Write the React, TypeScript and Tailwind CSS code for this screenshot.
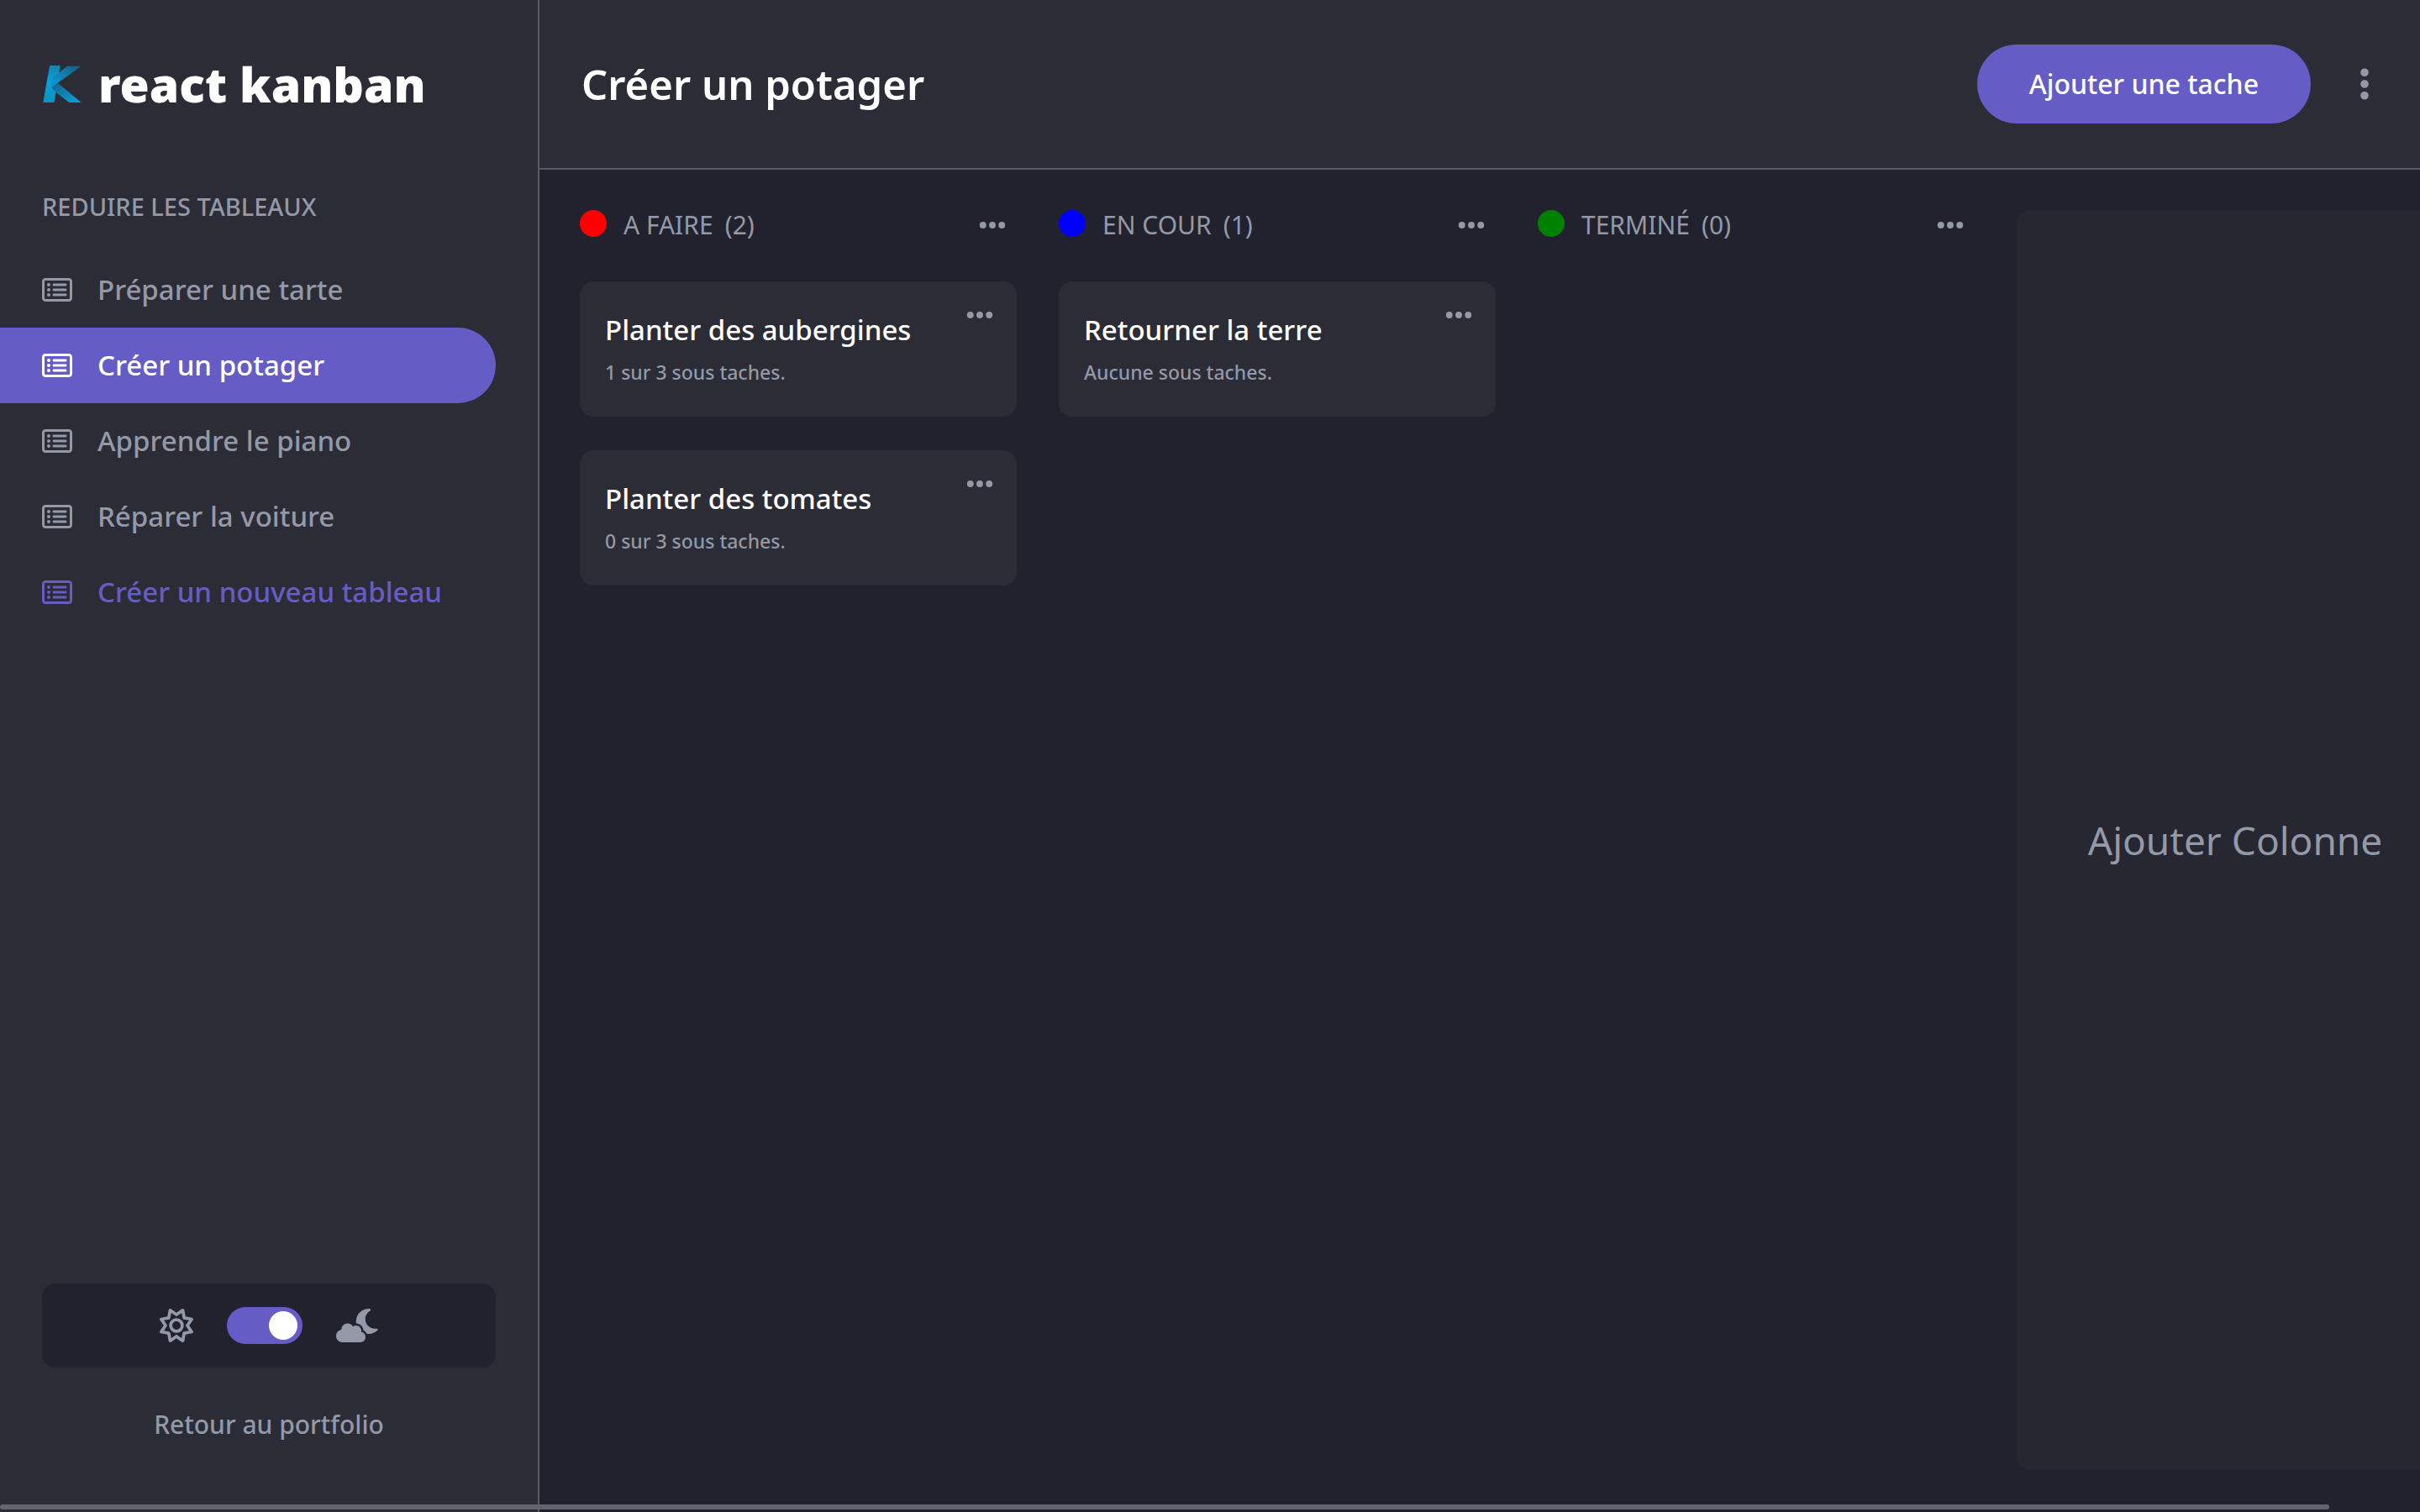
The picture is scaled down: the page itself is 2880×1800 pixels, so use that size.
import { useState } from "react";
import {
  FaCloudMoon,
  FaEllipsis,
  FaEllipsisVertical,
  FaRegRectangleList,
  FaRegSun,
} from "react-icons/fa6";

type Task = { title: string; detail: string };
type Column = { name: string; dot: string; tasks: Task[] };

const boards = ["Préparer une tarte", "Créer un potager", "Apprendre le piano", "Réparer la voiture"];

const columns: Column[] = [
  {
    name: "A FAIRE",
    dot: "bg-[#ff0000]",
    tasks: [
      { title: "Planter des aubergines", detail: "1 sur 3 sous taches." },
      { title: "Planter des tomates", detail: "0 sur 3 sous taches." },
    ],
  },
  {
    name: "EN COUR",
    dot: "bg-[#0000ff]",
    tasks: [{ title: "Retourner la terre", detail: "Aucune sous taches." }],
  },
  { name: "TERMINÉ", dot: "bg-[#008000]", tasks: [] },
];

function Logo() {
  return (
    <svg viewBox="37 58 134 130" className="h-11 w-[46px] shrink-0" aria-hidden="true">
      <defs>
        <linearGradient id="stem" x1="0" y1="0" x2="0" y2="1">
          <stop offset="0" stopColor="#0f86b0" />
          <stop offset="0.45" stopColor="#0d9fdb" />
          <stop offset="1" stopColor="#0b93bf" />
        </linearGradient>
        <linearGradient id="arm" x1="0" y1="1" x2="1" y2="0">
          <stop offset="0" stopColor="#0a9be0" />
          <stop offset="0.55" stopColor="#0f7fae" />
          <stop offset="1" stopColor="#155a78" />
        </linearGradient>
        <linearGradient id="leg" x1="0" y1="0" x2="1" y2="1">
          <stop offset="0" stopColor="#125f86" />
          <stop offset="0.55" stopColor="#0e86b8" />
          <stop offset="1" stopColor="#0aa3d8" />
        </linearGradient>
      </defs>
      <path d="M60 58H97L76 188H37Z" fill="url(#stem)" />
      <path d="M62 132L85 116L171 188H128L80 150Z" fill="url(#leg)" />
      <path d="M122 60H171L62 138L70 100Z" fill="url(#arm)" />
    </svg>
  );
}

function TaskCard({ task }: { task: Task }) {
  return (
    <li className="flex items-start justify-between rounded-2xl bg-[#2b2c36] pt-[22px] pr-[26px] pb-[30px] pl-[30px]">
      <div className="pt-2">
        <h3 className="text-[33px] leading-[56px] font-medium text-white">{task.title}</h3>
        <p className="text-[23px] leading-[45px] font-medium text-[#9499a8]">{task.detail}</p>
      </div>
      <button type="button" aria-label="Options de la tache" className="text-[#9499a8]">
        <FaEllipsis className="size-9" />
      </button>
    </li>
  );
}

function BoardColumn({ column }: { column: Column }) {
  return (
    <section className="w-[520px] shrink-0">
      <div className="flex h-9 items-start pr-[11px] text-[#9499a8]">
        <span className={`mr-5 size-8 rounded-full ${column.dot}`} />
        <h2 className="flex gap-3.5 text-[30px] leading-9">
          <span>{column.name}</span>
          <span>({column.tasks.length})</span>
        </h2>
        <button type="button" aria-label="Options de la colonne" className="ml-auto">
          <FaEllipsis className="size-9" />
        </button>
      </div>
      <ul className="mt-[49px] flex flex-col gap-10">
        {column.tasks.map((task) => (
          <TaskCard key={task.title} task={task} />
        ))}
      </ul>
    </section>
  );
}

function Sidebar({ active, onSelect }: { active: string; onSelect: (name: string) => void }) {
  const [dark, setDark] = useState(true);
  return (
    <aside className="flex w-[642px] shrink-0 flex-col border-r-2 border-[#5a5a65] bg-[#2b2c36]">
      <div className="flex h-[200px] items-center gap-5 pl-[51px]">
        <Logo />
        <p className="text-[57px] leading-none font-black text-white">react kanban</p>
      </div>
      <h2 className="mt-[26px] mb-[34px] pl-[50px] text-[29px] leading-10 font-medium text-[#9499a8]">
        REDUIRE LES TABLEAUX
      </h2>
      <nav className="flex flex-col pr-[50px] text-[33px] font-medium text-[#9499a8]">
        {boards.map((name) => (
          <button
            key={name}
            type="button"
            onClick={() => onSelect(name)}
            className={
              name === active
                ? "flex h-[90px] items-center gap-[30px] rounded-r-full bg-[#655dc5] pl-[50px] text-white"
                : "flex h-[90px] items-center gap-[30px] pl-[50px]"
            }
          >
            <FaRegRectangleList className="size-9" />
            {name}
          </button>
        ))}
        <button type="button" className="flex h-[90px] items-center gap-[30px] pl-[50px] text-[#655dc5]">
          <FaRegRectangleList className="size-9" />
          Créer un nouveau tableau
        </button>
      </nav>
      <div className="mx-[50px] mt-auto flex h-[100px] items-center justify-center gap-10 rounded-2xl bg-[#21222d] text-[#9499a8]">
        <FaRegSun className="size-10" />
        <label className="flex h-11 w-[90px] cursor-pointer items-center rounded-full bg-[#655dc5] px-1.5">
          <input
            type="checkbox"
            role="switch"
            aria-label="Mode sombre"
            checked={dark}
            onChange={(e) => setDark(e.target.checked)}
            className="size-[34px] cursor-pointer appearance-none rounded-full bg-white checked:ml-auto"
          />
        </label>
        <FaCloudMoon className="h-10 w-[50px]" />
      </div>
      <a
        href="#portfolio"
        className="mt-12 mb-[84px] self-center text-[30px] leading-10 font-medium text-[#9499a8]"
      >
        Retour au portfolio
      </a>
    </aside>
  );
}

export default function App() {
  const [active, setActive] = useState("Créer un potager");
  return (
    <div className="relative flex h-screen overflow-hidden bg-[#21222d] font-['Noto_Sans',sans-serif]">
      <Sidebar active={active} onSelect={setActive} />
      <main className="flex min-w-0 flex-1 flex-col">
        <header className="flex h-[202px] shrink-0 items-center border-b-2 border-[#5a5a65] bg-[#2b2c36] pr-11 pl-[50px]">
          <h1 className="text-[49px] leading-none font-semibold text-white">{active}</h1>
          <button
            type="button"
            className="ml-auto h-[94px] rounded-full bg-[#655dc5] px-[62px] text-[32px] font-medium text-white"
          >
            Ajouter une tache
          </button>
          <button type="button" aria-label="Options du tableau" className="ml-[42px] text-[#9499a8]">
            <FaEllipsisVertical className="size-11" />
          </button>
        </header>
        <div className="flex flex-1 gap-[50px] overflow-hidden pt-12 pb-[50px] pl-12">
          {columns.map((column) => (
            <BoardColumn key={column.name} column={column} />
          ))}
          <button
            type="button"
            className="w-[520px] shrink-0 rounded-2xl bg-[#262731] text-[46px] text-[#9499a8]"
          >
            Ajouter Colonne
          </button>
        </div>
      </main>
      <div className="absolute bottom-[3px] left-0 h-1.5 w-[96.25%] rounded-full bg-[#64656c]" />
    </div>
  );
}
